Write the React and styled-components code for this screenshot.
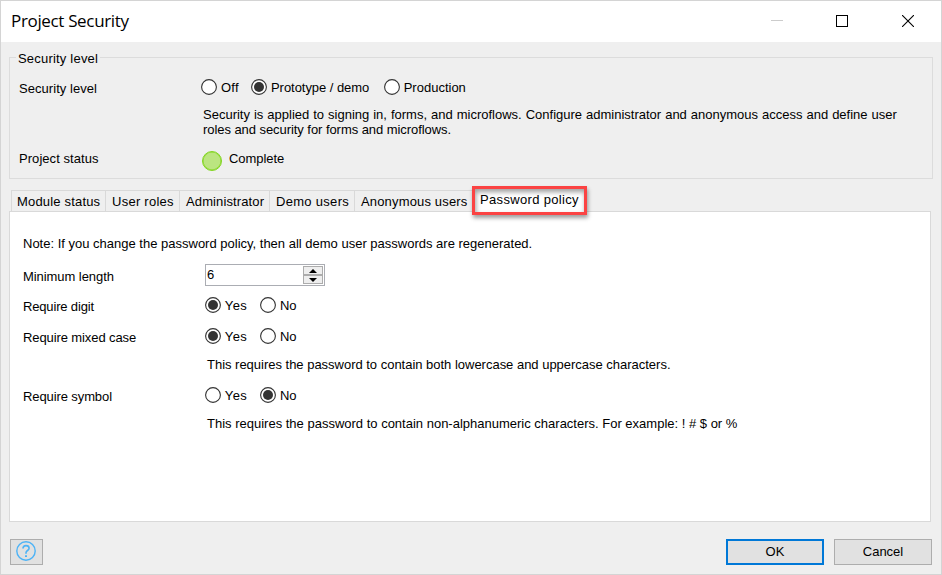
import React from 'react';
import styled, { createGlobalStyle } from 'styled-components';

const GlobalStyle = createGlobalStyle`
  * { box-sizing: border-box; }
  body { margin: 0; }
`;

const Window = styled.div`
  width: 942px;
  height: 575px;
  border: 1px solid #d4d4d4;
  background: #efefef;
  color: #000;
  font: 13px/15px "Liberation Sans", Arial, sans-serif;
  white-space: nowrap;
  overflow: hidden;
`;

const TitleBar = styled.header`
  display: flex;
  align-items: center;
  height: 41px;
  padding-left: 10px;
  background: #fff;
`;

const Title = styled.h1`
  flex: 1;
  margin: -2px 0 0;
  font: 400 17px/24px "Open Sans", "Noto Sans", sans-serif;
  letter-spacing: -0.34px;
`;

const CaptionIcons = styled.div`
  display: flex;
  gap: 54px;
  padding-right: 27px;
  margin-top: -1px;

  svg { display: block; fill: none; }
  svg:first-child { margin-right: -1px; }
`;

const Text = styled.span`
  letter-spacing: ${({ $spacing = 0 }) => $spacing}px;
  word-spacing: ${({ $words = 0 }) => $words}px;
`;

const Group = styled.fieldset`
  width: 924px;
  height: 128px;
  margin: 9px 0 0 8px;
  padding: 15px 0 0 9px;
  border: 1px solid #dcdcdc;
`;

const Legend = styled.legend`
  height: 13px;
  margin-left: -3px;
  padding: 0 2px 0 2px;
  letter-spacing: 0.2px;
`;

const Row = styled.div`
  display: flex;
  align-items: flex-start;
  margin-top: ${({ $gap = 0 }) => $gap}px;
`;

const Label = styled.div`
  width: ${({ $width }) => $width}px;
  flex: none;
  padding-top: ${({ $drop = 2 }) => $drop}px;
  letter-spacing: ${({ $spacing = 0 }) => $spacing}px;
`;

const Description = styled.p`
  margin: ${({ $gap }) => $gap}px 0 0 ${({ $indent }) => $indent}px;
`;

const RadioOption = styled.label`
  display: flex;
  align-items: flex-start;
  width: ${({ $width }) => $width}px;
  height: 16px;
`;

const RadioText = styled.span`
  padding: 1px 0 0 ${({ $inset }) => $inset}px;
  letter-spacing: ${({ $spacing = 0 }) => $spacing}px;
`;

const RadioIcon = styled.svg`
  display: block;
  flex: none;
  width: 16px;
  height: 16px;
`;

const StatusLight = styled.span`
  width: 20px;
  height: 20px;
  margin: 0 7px 0 1px;
  border: 1.5px solid #83d622;
  border-radius: 50%;
  background: #bbe580;
  box-shadow: inset 0 0 0 0.5px #83d622;
`;

const TabStrip = styled.nav`
  display: flex;
  height: 21px;
  margin: 11px 0 0 10px;
`;

const Tab = styled.div`
  width: ${({ $width }) => $width}px;
  height: 21px;
  padding: 3px 0 0 ${({ $inset }) => $inset - 1}px;
  border: solid #d9d9d9;
  border-width: 1px 0 0 1px;
  letter-spacing: ${({ $spacing }) => $spacing}px;
`;

const ActiveTab = styled.div`
  position: relative;
  z-index: 1;
  width: 115px;
  height: 29px;
  margin-top: -4px;
  padding: 3px 0 0 5px;
  border: 3px solid #fb4343;
  background: #fff;
  box-shadow: 1px 3px 4px rgba(0, 0, 0, 0.38), inset 1px 3px 5px rgba(0, 0, 0, 0.38);
  letter-spacing: 0.33px;
`;

const Panel = styled.section`
  width: 922px;
  height: 311px;
  margin-left: 8px;
  padding: 24px 0 0 13px;
  border: 1px solid #d9d9d9;
  background: #fff;
`;

const Spinner = styled.div`
  display: flex;
  justify-content: space-between;
  width: 120px;
  height: 22px;
  padding: 1px 1px 1px 1px;
  border: 1px solid #abadb3;
`;

const SpinnerValue = styled.span`
  padding-top: 1px;
`;

const SpinnerButtons = styled.div`
  width: 20px;
  display: grid;
  grid-template-rows: 9px 9px;
`;

const SpinnerButton = styled.button`
  display: grid;
  place-items: center;
  padding: 0 1px 0 0;
  border: 1px solid #acacac;
  background: #eee;

  svg { display: block; }
`;

const Footer = styled.footer`
  display: flex;
  gap: 10px;
  padding: 17px 9px 0;
`;

const Button = styled.button`
  width: 98px;
  height: 26px;
  padding: 0 0 1px;
  border: ${({ $primary }) => ($primary ? '2px solid #0078d7' : '1px solid #adadad')};
  background: #e1e1e1;
  color: #000;
  font: inherit;
`;

const HelpButton = styled(Button)`
  display: grid;
  place-items: center;
  width: 33px;
  margin-right: auto;
  padding: 0 1px 2px 0;
`;

function Radio({ label, checked, width, inset = 4, spacing }) {
  return (
    <RadioOption $width={width}>
      <RadioIcon viewBox="0 0 16 16">
        <circle cx="8" cy="8" r="7.4" fill="#fff" stroke="#333" strokeWidth="1.1" />
        {checked && <circle cx="8" cy="8" r="5" fill="#333" />}
      </RadioIcon>
      <RadioText $inset={inset} $spacing={spacing}>{label}</RadioText>
    </RadioOption>
  );
}

function YesNo({ value }) {
  return (
    <>
      <Radio label="Yes" checked={value} width={55} inset={3.8} spacing={0.4} />
      <Radio label="No" checked={!value} width={55} spacing={-0.2} />
    </>
  );
}

const tabs = [
  { label: 'Module status', width: 94, inset: 6, spacing: 0.18 },
  { label: 'User roles', width: 74, inset: 7, spacing: 0.26 },
  { label: 'Administrator', width: 90, inset: 7, spacing: 0.12 },
  { label: 'Demo users', width: 85, inset: 7, spacing: 0.3 },
  { label: 'Anonymous users', width: 118, inset: 7, spacing: 0.16 },
];

export default function App() {
  return (
    <>
      <GlobalStyle />
      <Window>
        <TitleBar>
          <Title>Project Security</Title>
          <CaptionIcons>
            <svg width="12" height="12" stroke="#ccc"><path d="M0 5.5h12" /></svg>
            <svg width="12" height="12" stroke="#000"><rect x=".5" y=".5" width="11" height="11" /></svg>
            <svg width="12" height="12" stroke="#000" strokeWidth="1.1"><path d="M0 0l12 12M12 0L0 12" /></svg>
          </CaptionIcons>
        </TitleBar>

        <Group>
          <Legend>Security level</Legend>
          <Row>
            <Label $width={182} $spacing={0.05}>Security level</Label>
            <Radio label="Off" width={50} spacing={0.2} />
            <Radio label="Prototype / demo" checked width={133} spacing={-0.05} />
            <Radio label="Production" width={90} inset={3.7} />
          </Row>
          <Description $gap={11} $indent={184}>
            <Text $words={0.37}>
              Security is applied to signing in, forms, and microflows. Configure administrator and anonymous access and define user
            </Text>
            <br />
            <Text $spacing={-0.06}>roles and security for forms and microflows.</Text>
          </Description>
          <Row $gap={14}>
            <Label $width={182} $drop={0} $spacing={0.05}>Project status</Label>
            <StatusLight />
            <Text $spacing={-0.05}>Complete</Text>
          </Row>
        </Group>

        <TabStrip>
          {tabs.map((tab) => (
            <Tab key={tab.label} $width={tab.width} $inset={tab.inset} $spacing={tab.spacing}>
              {tab.label}
            </Tab>
          ))}
          <ActiveTab>Password policy</ActiveTab>
        </TabStrip>

        <Panel>
          <Text>
            Note: If you change the password policy, then all demo user passwords are regenerated.
          </Text>
          <Row $gap={13}>
            <Label $width={182} $drop={5} $spacing={-0.06}>Minimum length</Label>
            <Spinner>
              <SpinnerValue>6</SpinnerValue>
              <SpinnerButtons>
                <SpinnerButton><svg width="8" height="4"><path d="M4 0L8 4H0z" /></svg></SpinnerButton>
                <SpinnerButton><svg width="8" height="4"><path d="M0 0H8L4 4z" /></svg></SpinnerButton>
              </SpinnerButtons>
            </Spinner>
          </Row>
          <Row $gap={11}>
            <Label $width={182} $spacing={-0.16}>Require digit</Label>
            <YesNo value />
          </Row>
          <Row $gap={14}>
            <Label $width={182} $spacing={-0.1}>Require mixed case</Label>
            <YesNo value />
          </Row>
          <Description $gap={12} $indent={184}>
            <Text $spacing={-0.015}>This requires the password to contain both lowercase and uppercase characters.</Text>
          </Description>
          <Row $gap={15}>
            <Label $width={182} $spacing={-0.1}>Require symbol</Label>
            <YesNo value={false} />
          </Row>
          <Description $gap={12} $indent={184}>
            This requires the password to contain non-alphanumeric characters. For example: ! # $ or %
          </Description>
        </Panel>

        <Footer>
          <HelpButton aria-label="Help">
            <svg width="20" height="20" viewBox="0 0 20 20" fill="none" stroke="#4db3f6" strokeWidth="1.4">
              <circle cx="10" cy="10" r="9.2" />
              <path d="M7 7.6C7 5.5 8.2 4.6 10 4.6s3.1 1 3.1 2.6c0 2.2-3.1 2.4-3.1 4.5v1" strokeWidth="1.6" />
              <path d="M10 14.2v1.8" strokeWidth="2" />
            </svg>
          </HelpButton>
          <Button $primary>OK</Button>
          <Button>Cancel</Button>
        </Footer>
      </Window>
    </>
  );
}
